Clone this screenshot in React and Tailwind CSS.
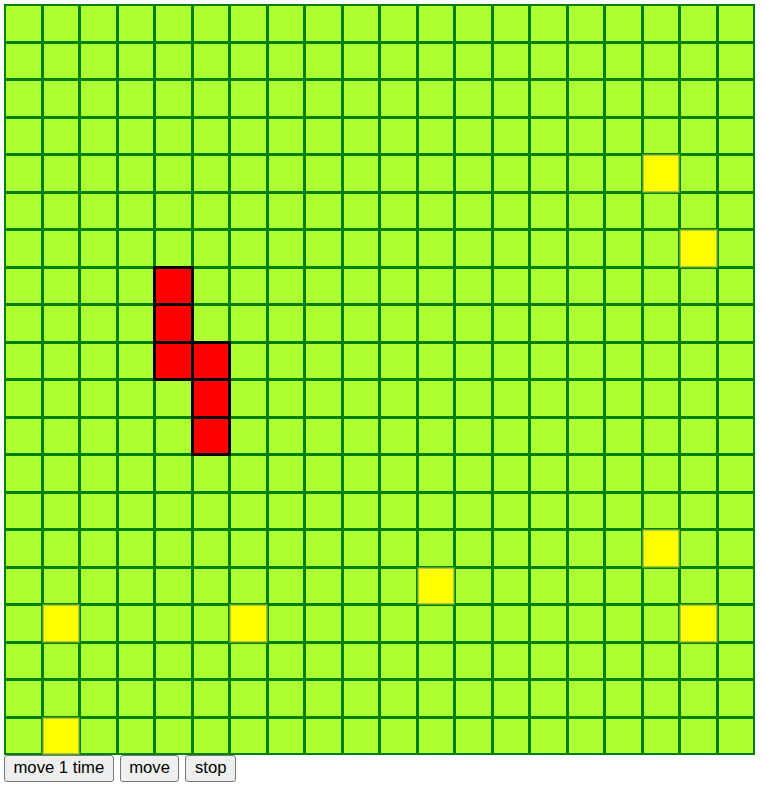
import { useState } from 'react'

const SIZE = 20

const snake = [
  [7, 4], [8, 4], [9, 4], [9, 5], [10, 5], [11, 5],
]

const food = [
  [4, 17], [6, 18], [14, 17], [15, 11], [16, 1], [16, 6], [16, 18], [19, 1],
]

const has = (list, r, c) => list.some(([lr, lc]) => lr === r && lc === c)

export default function App() {
  const [running, setRunning] = useState(false)

  const cells = []
  for (let r = 0; r < SIZE; r++) {
    for (let c = 0; c < SIZE; c++) {
      let cls = 'bg-[#adff2f]'
      if (has(snake, r, c)) cls = 'bg-[#ff0000] outline-[3px] outline-solid outline-black relative z-10'
      else if (has(food, r, c)) cls = 'bg-[#ffff00] shadow-[0_0_0_1.5px_#a8c43a]'
      cells.push(<div key={`${r}-${c}`} className={`h-[34.5px] ${cls}`} />)
    }
  }

  return (
    <div className="min-h-screen bg-white" style={{ fontFamily: '"Liberation Sans", Arial, sans-serif' }}>
      <div className="ml-[4px] mt-[4px] inline-grid grid-cols-[repeat(20,34.5px)] gap-[3px] bg-[#008000] p-[2px]">
        {cells}
      </div>
      <div className="ml-[4px] flex gap-[6px]">
        <button className="h-[27px] rounded-[3px] border border-[#767676] bg-[#efefef] px-[8.5px] text-[16.67px] leading-none text-black">
          move 1 time
        </button>
        <button onClick={() => setRunning(true)} className="h-[27px] rounded-[3px] border border-[#767676] bg-[#efefef] px-[8.5px] text-[16.67px] leading-none text-black">
          move
        </button>
        <button onClick={() => setRunning(false)} className="h-[27px] rounded-[3px] border border-[#767676] bg-[#efefef] px-[8.5px] text-[16.67px] leading-none text-black">
          stop
        </button>
      </div>
      <span className="hidden">{running ? 'on' : 'off'}</span>
    </div>
  )
}
